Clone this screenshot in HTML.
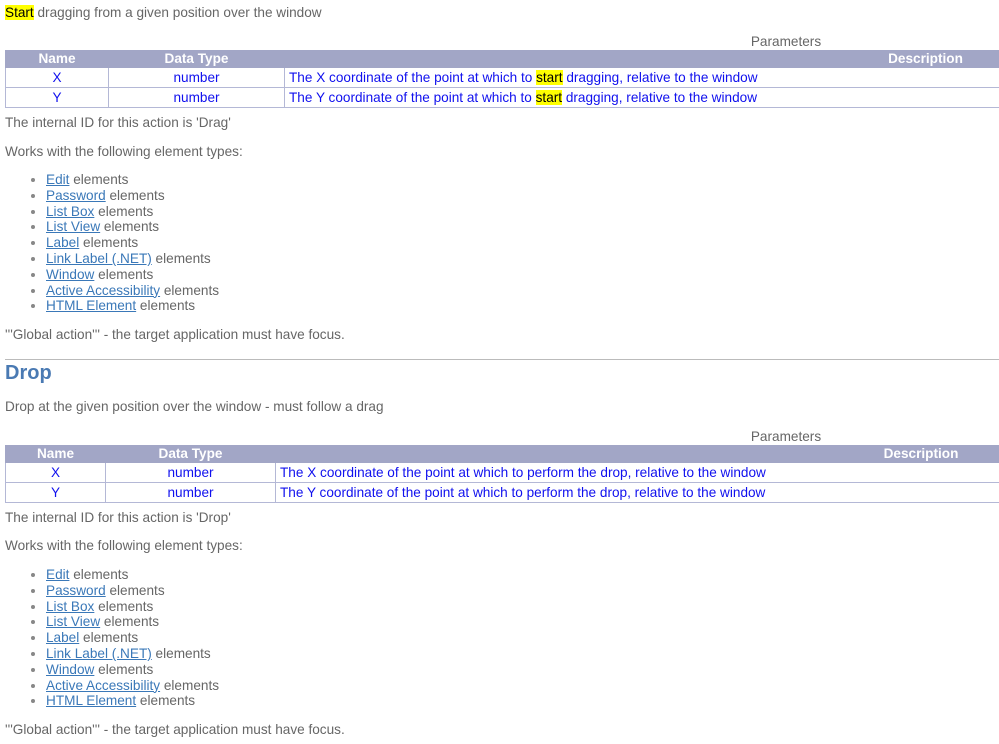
<!DOCTYPE html>
<html><head><meta charset="utf-8"><style>
html,body{margin:0;padding:0;width:999px;height:744px;overflow:hidden;background:#fff}
body{font-family:"Liberation Sans",Arial,sans-serif;font-size:13.6px;color:#666;position:relative}
.a{position:absolute;left:5px;white-space:nowrap;line-height:16px}
mark{background:#ffff00;color:#000}
a{color:#3a78b8;text-decoration:underline}
table{position:absolute;left:5px;width:1562px;border-collapse:collapse;font-size:13.6px}
caption{color:#666;line-height:16px;height:16px;padding-bottom:0}
th{background:#a2a6c6;color:#fff;font-weight:bold;height:16px;line-height:16px;padding:0;text-align:center;border:1px solid #a2a6c6}
td{border:1px solid #b4b8d6;color:#1010ee;height:19px;line-height:19px;padding:0 4px;text-align:center}
td.d{text-align:left}
ul{position:absolute;left:0;margin:0;padding:0 0 0 46px;line-height:15.8px;list-style:disc}
li{color:#666}
li::marker{color:#888}
hr{position:absolute;left:5px;width:994px;margin:0;border:0;border-top:1px solid #bbb}
h2{position:absolute;left:5px;margin:0;font-size:20px;color:#4a7ab3;line-height:24px}
</style></head><body>
<div class="a" style="top:5px"><mark>Start</mark> dragging from a given position over the window</div>
<table style="top:34px">
<caption>Parameters</caption>
<tr><th style="width:102px">Name</th><th style="width:175px">Data Type</th><th>Description</th></tr>
<tr><td>X</td><td>number</td><td class="d">The X coordinate of the point at which to <mark>start</mark> dragging, relative to the window</td></tr>
<tr><td>Y</td><td>number</td><td class="d">The Y coordinate of the point at which to <mark>start</mark> dragging, relative to the window</td></tr>
</table>
<div class="a" style="top:115px">The internal ID for this action is 'Drag'</div>
<div class="a" style="top:144px">Works with the following element types:</div>
<ul style="top:172px">
<li><a>Edit</a> elements</li><li><a>Password</a> elements</li><li><a>List Box</a> elements</li><li><a>List View</a> elements</li><li><a>Label</a> elements</li><li><a>Link Label (.NET)</a> elements</li><li><a>Window</a> elements</li><li><a>Active Accessibility</a> elements</li><li><a>HTML Element</a> elements</li>
</ul>
<div class="a" style="top:327px">'''Global action''' - the target application must have focus.</div>
<hr style="top:359px">
<h2 style="top:361px">Drop</h2>
<div class="a" style="top:399px">Drop at the given position over the window - must follow a drag</div>
<table style="top:429px">
<caption>Parameters</caption>
<tr><th style="width:99px">Name</th><th style="width:169px">Data Type</th><th>Description</th></tr>
<tr><td>X</td><td>number</td><td class="d">The X coordinate of the point at which to perform the drop, relative to the window</td></tr>
<tr><td>Y</td><td>number</td><td class="d">The Y coordinate of the point at which to perform the drop, relative to the window</td></tr>
</table>
<div class="a" style="top:510px">The internal ID for this action is 'Drop'</div>
<div class="a" style="top:538px">Works with the following element types:</div>
<ul style="top:567px">
<li><a>Edit</a> elements</li><li><a>Password</a> elements</li><li><a>List Box</a> elements</li><li><a>List View</a> elements</li><li><a>Label</a> elements</li><li><a>Link Label (.NET)</a> elements</li><li><a>Window</a> elements</li><li><a>Active Accessibility</a> elements</li><li><a>HTML Element</a> elements</li>
</ul>
<div class="a" style="top:722px">'''Global action''' - the target application must have focus.</div>
</body></html>
